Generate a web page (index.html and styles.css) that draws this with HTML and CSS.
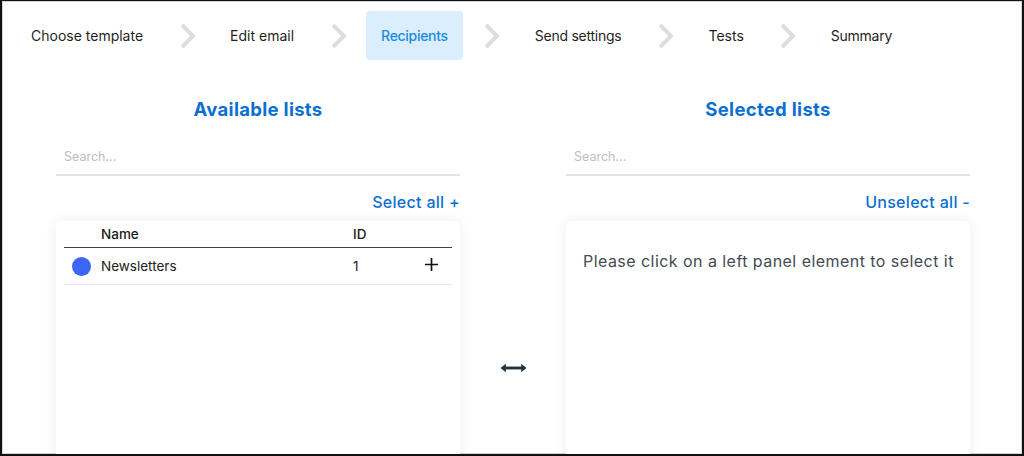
FILE: index.html
```html
<!DOCTYPE html>
<html lang="en">
<head>
<meta charset="utf-8">
<title>Recipients</title>
<link rel="stylesheet" href="styles.css">
</head>
<body>
<div class="frame">
  <nav class="stepper">
    <div class="step">Choose template</div>
    <div class="sep"><svg viewBox="0 0 20 26" width="20" height="26"><path d="M4 2 L15 13 L4 24" fill="none" stroke="#dedede" stroke-width="4"/></svg></div>
    <div class="step">Edit email</div>
    <div class="sep"><svg viewBox="0 0 20 26" width="20" height="26"><path d="M4 2 L15 13 L4 24" fill="none" stroke="#dedede" stroke-width="4"/></svg></div>
    <div class="step active">Recipients</div>
    <div class="sep"><svg viewBox="0 0 20 26" width="20" height="26"><path d="M4 2 L15 13 L4 24" fill="none" stroke="#dedede" stroke-width="4"/></svg></div>
    <div class="step tight">Send settings</div>
    <div class="sep"><svg viewBox="0 0 20 26" width="20" height="26"><path d="M4 2 L15 13 L4 24" fill="none" stroke="#dedede" stroke-width="4"/></svg></div>
    <div class="step">Tests</div>
    <div class="sep"><svg viewBox="0 0 20 26" width="20" height="26"><path d="M4 2 L15 13 L4 24" fill="none" stroke="#dedede" stroke-width="4"/></svg></div>
    <div class="step tight">Summary</div>
  </nav>

  <main class="lists">
    <section class="col">
      <h2 class="col-title">Available lists</h2>
      <input class="search" type="text" placeholder="Search...">
      <div class="bulk"><span>Select all +</span></div>
      <div class="card">
        <table class="tbl">
          <thead>
            <tr><th class="c-dot"></th><th class="c-name">Name</th><th class="c-id">ID</th><th class="c-act"></th></tr>
          </thead>
          <tbody>
            <tr>
              <td class="c-dot"><span class="dot"></span></td>
              <td class="c-name">Newsletters</td>
              <td class="c-id">1</td>
              <td class="c-act"><svg viewBox="0 0 16 16" width="15" height="15"><path d="M8 1 V15 M1 8 H15" stroke="#111" stroke-width="1.8" fill="none"/></svg></td>
            </tr>
          </tbody>
        </table>
      </div>
    </section>

    <div class="swap">
      <svg viewBox="0 0 28 12" width="27" height="12"><path d="M4 6 H24" stroke="#23343f" stroke-width="3"/><path d="M0.5 6 L6 1.5 L6 10.5 Z M27.5 6 L22 1.5 L22 10.5 Z" fill="#23343f"/></svg>
    </div>

    <section class="col">
      <h2 class="col-title">Selected lists</h2>
      <input class="search" type="text" placeholder="Search...">
      <div class="bulk"><span>Unselect all -</span></div>
      <div class="card">
        <p class="empty">Please click on a left panel element to select it</p>
      </div>
    </section>
  </main>
</div>
</body>
</html>
```

FILE: styles.css
```css
html, body {
  margin: 0;
  padding: 0;
  height: 456px;
  overflow: hidden;
  background: #fff;
}
body {
  font-family: "Inter", "Open Sans", sans-serif;
  color: #1d1d1d;
}
.frame {
  box-sizing: border-box;
  height: 456px;
  border-style: solid;
  border-color: #111;
  border-width: 1px 2px 2px 2px;
  box-shadow: inset 0 0 0 1px #d6d6d6;
  overflow: hidden;
  background: #fff;
}
.stepper {
  display: flex;
  align-items: center;
  padding: 10px 0 0 14px;
  height: 49px;
}
.step {
  height: 49px;
  display: flex;
  align-items: center;
  padding: 0 15px;
  font-size: 14px;
  color: #1f1f1f;
  border-radius: 4px;
  white-space: nowrap;
}
.step.tight { letter-spacing: -0.25px; }
.step.active {
  background: #dbeefd;
  color: #1a8ce0;
  font-weight: 500;
  letter-spacing: -0.3px;
}
.sep {
  width: 57px;
  display: flex;
  justify-content: center;
  align-items: center;
}
.sep svg { display: block; margin-left: 2px; }

.lists {
  display: grid;
  grid-template-columns: 404px 106px 404px;
  justify-content: center;
  padding-left: 2px;
  margin-top: 36px;
}
.col {
  display: flex;
  flex-direction: column;
}
.col-title {
  margin: 0;
  text-align: center;
  font-size: 18.5px;
  letter-spacing: 0.3px;
  font-weight: 700;
  color: #0b6fd2;
  line-height: 27px;
}
.search {
  margin-top: 15px;
  height: 36px;
  border: none;
  border-bottom: 2px solid #e3e3e3;
  padding: 0 8px;
  font-family: inherit;
  font-size: 12.5px;
  outline: none;
  background: transparent;
}
.search::placeholder { color: #bdbdbd; }
.bulk {
  display: flex;
  justify-content: flex-end;
  margin-top: 15px;
  font-size: 16px;
  letter-spacing: 0.3px;
  color: #0b6fd2;
  line-height: 22px;
  font-weight: 500;
}
.card {
  margin-top: 8px;
  height: 300px;
  background: #fff;
  border-radius: 5px;
  box-shadow: 0 0 14px rgba(0, 0, 0, 0.07);
  padding: 0 8px;
}
.tbl {
  width: 100%;
  border-collapse: collapse;
  font-size: 13.5px;
}
.tbl th {
  text-align: left;
  font-weight: 500;
  height: 26px;
  padding: 0;
  border-bottom: 1.5px solid #39414a;
  vertical-align: middle;
  color: #1a1a1a;
}
.tbl td {
  height: 36px;
  padding: 0;
  border-bottom: 1px solid #e6e6e6;
  vertical-align: middle;
  color: #222;
}
.c-dot { width: 37px; }
.c-id { width: 64px; }
.c-act { width: 35px; }
.dot {
  display: block;
  width: 19px;
  height: 19px;
  border-radius: 50%;
  background: #3c66f6;
  margin-left: 8px;
}
.c-act svg { display: block; margin: -3px 0 0 7px; }
.swap {
  display: flex;
  justify-content: center;
  align-items: flex-start;
  padding-top: 266px;
}
.empty {
  margin: 30px 0 0 9px;
  font-size: 16px;
  letter-spacing: 0.45px;
  color: #444b53;
}
```
